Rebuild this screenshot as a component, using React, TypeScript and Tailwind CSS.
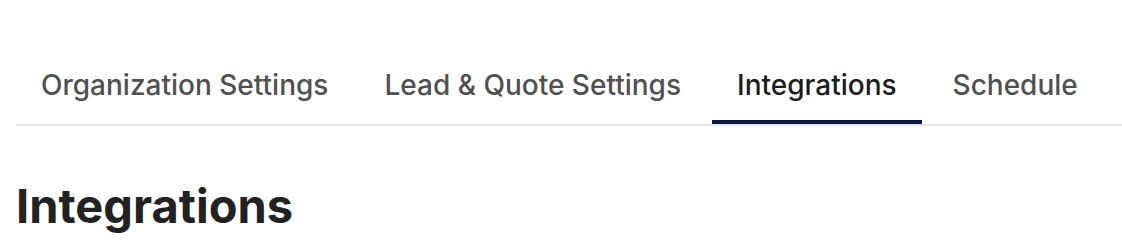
import { useState } from "react";

const TABS = [
  "Organization Settings",
  "Lead & Quote Settings",
  "Integrations",
  "Schedule",
];

export default function App() {
  const [active, setActive] = useState("Integrations");

  return (
    <div className="bg-white min-h-[250px] pl-4 pt-[55px] font-['Inter',sans-serif]">
      <div className="flex gap-[6px] border-b-2 border-[#e6e6e6]">
        {TABS.map((tab) => (
          <button
            key={tab}
            onClick={() => setActive(tab)}
            className={
              tab === active
                ? "px-[25px] pt-[12px] pb-[17px] text-[28px] leading-[36px] font-medium text-[#1c1c1c] border-b-4 border-[#0b1844]"
                : "px-[25px] pt-[12px] pb-[17px] text-[28px] leading-[36px] font-medium text-[#505050] border-b-4 border-transparent"
            }
          >
            {tab}
          </button>
        ))}
      </div>
      <h1 className="mt-[52px] text-[47px] leading-[56px] font-bold text-[#222222]">
        Integrations
      </h1>
    </div>
  );
}
